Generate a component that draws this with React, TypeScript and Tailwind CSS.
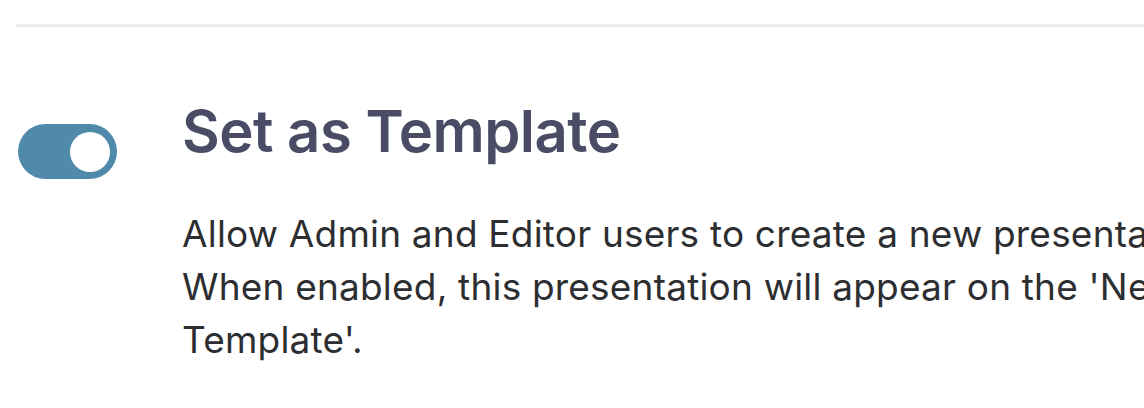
import React, { useState } from 'react';

export default function App() {
  const [enabled, setEnabled] = useState(true);

  return (
    <div className="w-[1144px] h-[408px] overflow-hidden bg-white font-['Inter',sans-serif]">
      {/* Divider */}
      <div className="pt-[24px] pl-[16px]">
        <div className="h-[3px] w-[1200px] bg-[#ebebeb]" />
      </div>

      {/* Setting row */}
      <div className="flex items-start mt-[78px]">
        <div className="pl-[18px] pt-[19px] w-[182px] shrink-0">
          <button
            onClick={() => setEnabled(!enabled)}
            className={`w-[99px] h-[55px] rounded-full flex items-center px-[7px] ${
              enabled ? 'bg-[#4f8aab] justify-end' : 'bg-[#d1d5db] justify-start'
            }`}
            aria-label="Set as Template"
          >
            <span className="w-[40px] h-[40px] rounded-full bg-white block" />
          </button>
        </div>

        <div className="shrink-0">
          <h2 className="text-[58px] leading-[52px] font-semibold text-[#4a4c66] tracking-[-0.5px]">
            Set as Template
          </h2>
          <p className="mt-[50px] text-[37px] leading-[53px] text-[#2d2e31] tracking-[0.2px] whitespace-nowrap">
            Allow Admin and Editor users to create a new presentation from this one.
            <br />
            When enabled, this presentation will appear on the 'New from
            <br />
            Template'.
          </p>
        </div>
      </div>
    </div>
  );
}
